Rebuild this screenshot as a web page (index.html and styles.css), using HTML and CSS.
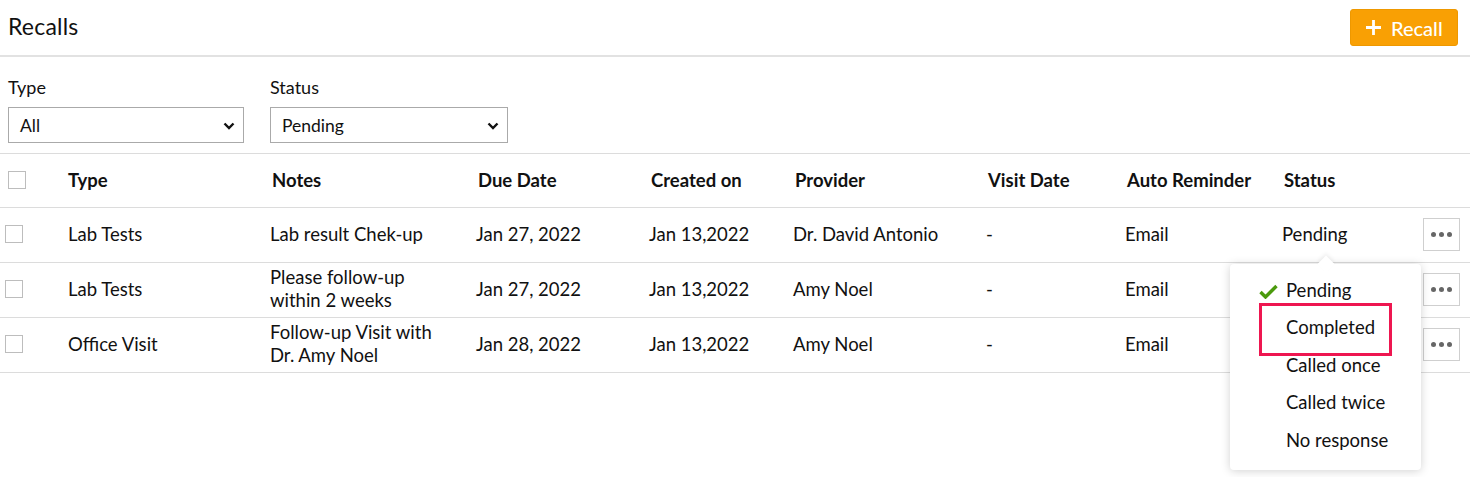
FILE: index.html
```html
<!DOCTYPE html>
<html>
<head>
<meta charset="utf-8">
<link rel="stylesheet" href="styles.css">
</head>
<body>
<header class="topbar">
  <h1 class="title">Recalls</h1>
  <button class="btn-add"><svg class="plus" width="15" height="15" viewBox="0 0 15 15"><path d="M7.5 0v15M0 7.5h15" stroke="#fff" stroke-width="2.8"/></svg><span>Recall</span></button>
</header>
<section class="filters">
  <div class="filter">
    <label class="flabel">Type</label>
    <div class="select"><span>All</span><svg class="chev" width="12" height="8" viewBox="0 0 12 8"><path d="M1.5 1.5l4.5 4.5 4.5-4.5" fill="none" stroke="#111" stroke-width="2.4"/></svg></div>
  </div>
  <div class="filter">
    <label class="flabel">Status</label>
    <div class="select"><span>Pending</span><svg class="chev" width="12" height="8" viewBox="0 0 12 8"><path d="M1.5 1.5l4.5 4.5 4.5-4.5" fill="none" stroke="#111" stroke-width="2.4"/></svg></div>
  </div>
</section>
<div class="table">
  <div class="row head">
    <div class="c"><span class="cb"></span></div>
    <div class="c">Type</div>
    <div class="c">Notes</div>
    <div class="c">Due Date</div>
    <div class="c">Created on</div>
    <div class="c">Provider</div>
    <div class="c">Visit Date</div>
    <div class="c">Auto Reminder</div>
    <div class="c">Status</div>
    <div class="c"></div>
  </div>
  <div class="row">
    <div class="c"><span class="cb"></span></div>
    <div class="c">Lab Tests</div>
    <div class="c">Lab result Chek-up</div>
    <div class="c">Jan 27, 2022</div>
    <div class="c">Jan 13,2022</div>
    <div class="c">Dr. David Antonio</div>
    <div class="c">-</div>
    <div class="c">Email</div>
    <div class="c status">Pending
      <div class="menu">
        <div class="mi"><svg class="check" width="19" height="15" viewBox="0 0 19 15"><path d="M1.5 8l5 5L17.5 2" fill="none" stroke="#4b9a0d" stroke-width="3.4"/></svg>Pending</div>
        <div class="mi sel">Completed</div>
        <div class="mi">Called once</div>
        <div class="mi">Called twice</div>
        <div class="mi">No response</div>
      </div>
    </div>
    <div class="c"><span class="dots"><i></i><i></i><i></i></span></div>
  </div>
  <div class="row">
    <div class="c"><span class="cb"></span></div>
    <div class="c">Lab Tests</div>
    <div class="c">Please follow-up<br>within 2 weeks</div>
    <div class="c">Jan 27, 2022</div>
    <div class="c">Jan 13,2022</div>
    <div class="c">Amy Noel</div>
    <div class="c">-</div>
    <div class="c">Email</div>
    <div class="c"></div>
    <div class="c"><span class="dots"><i></i><i></i><i></i></span></div>
  </div>
  <div class="row">
    <div class="c"><span class="cb"></span></div>
    <div class="c">Office Visit</div>
    <div class="c">Follow-up Visit with<br>Dr. Amy Noel</div>
    <div class="c">Jan 28, 2022</div>
    <div class="c">Jan 13,2022</div>
    <div class="c">Amy Noel</div>
    <div class="c">-</div>
    <div class="c">Email</div>
    <div class="c"></div>
    <div class="c"><span class="dots"><i></i><i></i><i></i></span></div>
  </div>
</div>
</body>
</html>
```
FILE: styles.css
```css
*, *::before, *::after { box-sizing: border-box; }
html, body { margin: 0; padding: 0; background: #fff; }
body {
  font-family: Lato, "Open Sans", "Liberation Sans", sans-serif;
  color: #111;
  font-size: 18.5px;
  min-height: 477px;
}
.topbar {
  display: flex;
  justify-content: space-between;
  align-items: center;
  height: 57px;
  padding: 0 12px 0 8px;
  border-bottom: 2px solid #e2e2e2;
}
.title {
  margin: 0;
  font-size: 23px;
  font-weight: 400;
  letter-spacing: 0.2px;
  padding-bottom: 4px;
}
.btn-add {
  display: flex;
  align-items: center;
  gap: 10px;
  height: 37px;
  width: 108px;
  padding: 0 0 0 15px;
  border: 1px solid #ee9800;
  border-radius: 3px;
  background: #f9a004;
  color: #fff;
  font-family: inherit;
  font-size: 20px;
  font-weight: 500;
}
.filters {
  display: flex;
  gap: 26px;
  padding: 20px 8px 10px;
  border-bottom: 1px solid #dcdcdc;
}
.flabel { display: block; font-size: 18px; line-height: 20px; margin-bottom: 10px; }
.select {
  display: flex;
  justify-content: space-between;
  align-items: center;
  width: 236px;
  height: 36px;
  padding: 0 8px 0 11px;
  border: 1px solid #aaa;
  font-size: 17.5px;
}
.filter:nth-child(2) .select { width: 238px; }
.chev { margin-top: 2px; }
.row {
  display: grid;
  grid-template-columns: 63px 202px 206px 173px 144px 193px 139px 157px 141px 36px;
  align-items: center;
  height: 55px;
  padding: 0 0 2px 5px;
  border-bottom: 1px solid #dcdcdc;
  line-height: 23px;
}
.row.head { height: 54px; padding-bottom: 0; font-weight: 700; }
.row.head .c:nth-child(n+3) { padding-left: 2px; }
.row.head .cb { margin: -2px 0 0 3px; }
.cb {
  display: block;
  width: 18px;
  height: 18px;
  border: 1px solid #bdbdbd;
  background: #fff;
}
.c { position: relative; }
.dots {
  display: flex;
  justify-content: center;
  align-items: center;
  gap: 3px;
  width: 37px;
  height: 33px;
  border: 1px solid #cfcfcf;
  background: #fff;
}
.dots i { width: 5px; height: 5px; border-radius: 50%; background: #666; }
.menu {
  position: absolute;
  left: -52px;
  top: 41px;
  width: 191px;
  height: 206px;
  padding: 15px 0 0 0;
  background: #fff;
  border-radius: 4px;
  box-shadow: 0 1px 10px rgba(0,0,0,0.18);
  z-index: 5;
  font-weight: 400;
}
.menu::before {
  content: "";
  position: absolute;
  left: 90px;
  top: -6px;
  width: 12px;
  height: 12px;
  background: #fff;
  transform: rotate(45deg);
  box-shadow: -2px -2px 4px rgba(0,0,0,0.06);
}
.mi {
  position: relative;
  height: 37.5px;
  line-height: 23px;
  padding-left: 56px;
  background: #fff;
}
.check { position: absolute; left: 29px; top: 5px; }
.mi.sel::after {
  content: "";
  position: absolute;
  left: 29px;
  top: -13px;
  width: 133px;
  height: 53px;
  border: 3px solid #ee1650;
}
.mi.sel { z-index: 1; background: transparent; }
```
